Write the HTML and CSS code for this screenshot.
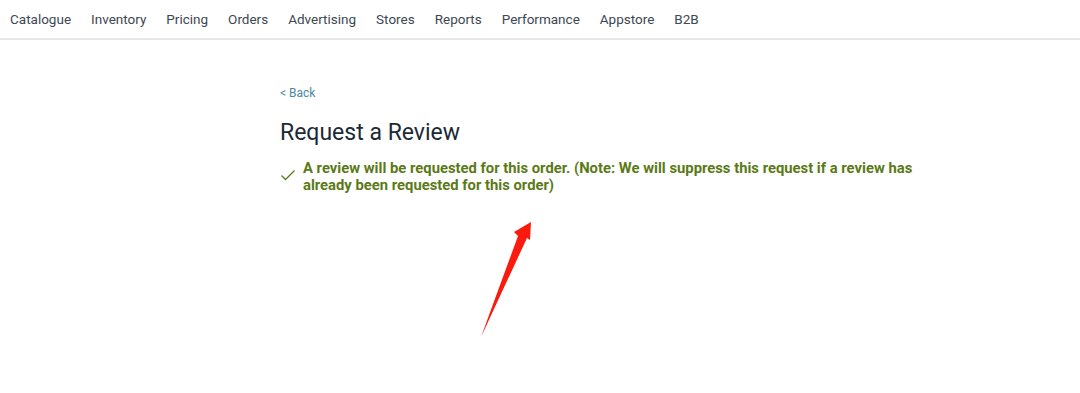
FILE: index.html
```html
<!DOCTYPE html>
<html lang="en">
<head>
    <meta charset="UTF-8">
    <meta name="viewport" content="width=device-width, initial-scale=1.0">
    <title>Request a Review</title>
    <link rel="stylesheet" href="styles.css">
</head>
<body>
    <nav class="top-nav">
        <a href="#">Catalogue</a>
        <a href="#">Inventory</a>
        <a href="#">Pricing</a>
        <a href="#">Orders</a>
        <a href="#">Advertising</a>
        <a href="#">Stores</a>
        <a href="#">Reports</a>
        <a href="#">Performance</a>
        <a href="#">Appstore</a>
        <a href="#">B2B</a>
    </nav>

    <div class="page">
        <a class="back-link" href="#">&lt; Back</a>
        <h1>Request a Review</h1>
        <div class="success-message">
            <svg class="check" width="16" height="12" viewBox="0 0 16 12">
                <path d="M1.5 6.5 L5.5 10.5 L14.5 1.5" fill="none" stroke="#5a7a1e" stroke-width="1.3"/>
            </svg>
            <p>A review will be requested for this order. (Note: We will suppress this request if a review has already been requested for this order)</p>
        </div>
    </div>

    <!-- annotation arrow -->
    <svg class="arrow" width="80" height="130" viewBox="0 0 80 130">
        <path d="M71 2 L70 20 L67 18 L21 117 L58 16 L54 12 Z" fill="#fb1a0e"/>
    </svg>
</body>
</html>
```

FILE: styles.css
```css
body {
    margin: 0;
    font-family: Roboto, "Liberation Sans", sans-serif;
    background: #fff;
    position: relative;
    height: 393px;
    overflow: hidden;
}
.top-nav {
    display: flex;
    gap: 20px;
    align-items: center;
    padding: 0 10px;
    border-bottom: 2px solid #e6e6e6;
    box-sizing: border-box;
    height: 40px;
}
.top-nav a {
    color: #3d4852;
    font-size: 13.5px;
    text-decoration: none;
}
.page {
    padding-left: 280px;
    padding-top: 46px;
}
.back-link {
    display: block;
    color: #4a8aa0;
    font-size: 12px;
    text-decoration: none;
    line-height: 14px;
}
h1 {
    margin: 19px 0 0;
    font-size: 23px;
    font-weight: 400;
    color: #1b2a36;
    line-height: 28px;
}
.success-message {
    display: flex;
    gap: 7px;
    margin-top: 13px;
    width: 645px;
}
.check {
    margin-top: 9px;
    flex-shrink: 0;
}
.success-message p {
    margin: 0;
    color: #5b7a17;
    font-size: 14.8px;
    font-weight: 700;
    line-height: 17px;
}
.arrow {
    position: absolute;
    left: 460px;
    top: 220px;
}
```
